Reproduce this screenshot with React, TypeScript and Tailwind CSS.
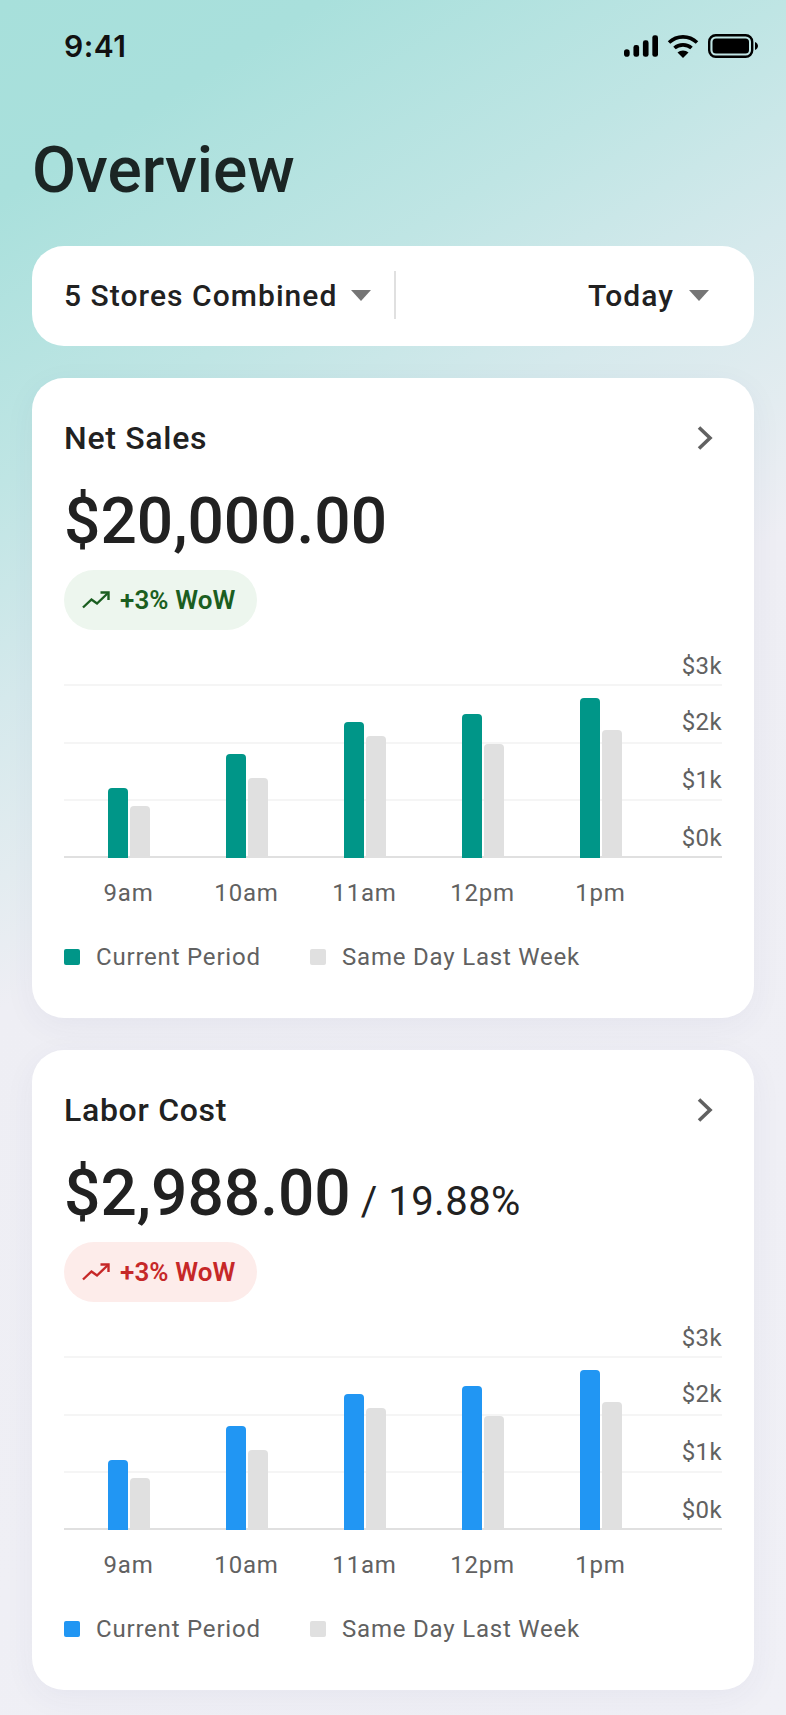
import React from "react";

type Group = { label: string; cur: number; prev: number };
const groups: Group[] = [
  { label: "9am", cur: 70, prev: 52 },
  { label: "10am", cur: 104, prev: 80 },
  { label: "11am", cur: 136, prev: 122 },
  { label: "12pm", cur: 144, prev: 114 },
  { label: "1pm", cur: 160, prev: 128 },
];

function Caret() {
  return (
    <svg width="20" height="11" viewBox="0 0 20 11" className="shrink-0">
      <path d="M0 0H20L10 11Z" fill="#757575" />
    </svg>
  );
}

function Trend({ color }: { color: string }) {
  return (
    <svg width="28" height="18" viewBox="0 0 28 18" fill="none" stroke={color} strokeWidth="2.4" className="shrink-0">
      <path d="M1 16.5 L9.5 8.5 L15 12.5 L26 2" />
      <path d="M18.5 1.5 H26.5 V9" />
    </svg>
  );
}

function Card({
  title,
  amount,
  extra,
  badgeClass,
  trendColor,
  barClass,
}: {
  title: string;
  amount: string;
  extra?: string;
  badgeClass: string;
  trendColor: string;
  barClass: string;
}) {
  return (
    <section className="bg-white rounded-[32px] h-[640px] px-8 pt-[40px] shadow-[0_8px_32px_rgba(60,60,110,0.05)]">
      <div className="flex items-center justify-between h-[40px]">
        <h2 className="text-[32px] leading-[40px] font-[460] text-[#212121] tracking-[0.7px]">{title}</h2>
        <svg width="20" height="26" viewBox="0 0 20 26" fill="none" stroke="#616161" strokeWidth="3.6" className="mr-[7px]">
          <path d="M4 2.5 L15 13 L4 23.5" />
        </svg>
      </div>
      <div className="flex items-baseline mt-[24px] h-[76px] leading-[80px]">
        <span className="text-[64px] font-medium text-[#212121]">{amount}</span>
        {extra && <span className="text-[40px] font-normal text-[#212121] ml-[10px] tracking-[0.5px]">{extra}</span>}
      </div>
      <div className={`flex items-center gap-[10px] w-[193px] h-[60px] rounded-[30px] mt-[12px] pl-[18px] ${badgeClass}`}>
        <Trend color={trendColor} />
        <span className="text-[26px] font-semibold tracking-[0.1px]">+3% WoW</span>
      </div>

      <div className="relative mt-[24px] h-[263px]">
        <div className="absolute left-0 right-0 top-[30px] border-t-2 border-[#f5f5f5]" />
        <div className="absolute left-0 right-0 top-[88px] border-t-2 border-[#f5f5f5]" />
        <div className="absolute left-0 right-0 top-[145px] border-t-2 border-[#f5f5f5]" />
        <div className="absolute left-0 right-0 top-[202px] border-t-2 border-[#e0e0e0]" />
        <div className="absolute right-0 top-0 bottom-0 text-[24px] leading-[32px] text-[#616161] tracking-[0.4px] text-right">
          <div className="absolute right-0 top-[-4px]">$3k</div>
          <div className="absolute right-0 top-[52px]">$2k</div>
          <div className="absolute right-0 top-[110px]">$1k</div>
          <div className="absolute right-0 top-[168px]">$0k</div>
        </div>
        <div className="absolute left-[6px] top-0 flex">
          {groups.map((g) => (
            <div key={g.label} className="w-[118px] flex flex-col items-center">
              <div className="h-[204px] flex items-end gap-[2px]">
                <div className={`w-[20px] rounded-t-[4px] ${barClass}`} style={{ height: g.cur }} />
                <div className="w-[20px] rounded-t-[4px] bg-[#e0e0e0]" style={{ height: g.prev }} />
              </div>
              <div className="mt-[19px] text-[24px] leading-[32px] text-[#616161] tracking-[0.8px] pr-[1px]">{g.label}</div>
            </div>
          ))}
        </div>
      </div>

      <div className="flex items-center mt-[24px] h-[32px] text-[24px] text-[#616161] tracking-[0.8px]">
        <span className={`w-[16px] h-[16px] rounded-[2px] ${barClass}`} />
        <span className="ml-[16px] w-[214px]">Current Period</span>
        <span className="w-[16px] h-[16px] rounded-[2px] bg-[#e0e0e0]" />
        <span className="ml-[16px]">Same Day Last Week</span>
      </div>
    </section>
  );
}

export default function App() {
  return (
    <div
      className="w-[786px] h-[1715px] overflow-hidden bg-[linear-gradient(148.6deg,#a7e0db_0%,#a9e0dc_9%,#bfe5e4_22%,#d5e9ec_32%,#e3ecf0_40%,#eeeef4_46%,#f0f0f6_100%)]"
      style={{ fontFamily: "Roboto, sans-serif" }}
    >
      <div className="flex items-center justify-between h-[90px] pl-[64px] pr-[28px] pt-[2px]">
        <span className="text-[30px] font-semibold text-[#111] tracking-[0.5px]" style={{ fontFamily: "Inter, sans-serif" }}>9:41</span>
        <div className="flex items-center gap-[9px]">
          <svg width="34" height="22" viewBox="0 0 36 23" fill="#000">
            <rect x="0" y="15" width="6" height="8" rx="3" />
            <rect x="10" y="10.5" width="6" height="12.5" rx="2.5" />
            <rect x="20" y="5.5" width="6" height="17.5" rx="2.5" />
            <rect x="30" y="0" width="6" height="23" rx="2.5" />
          </svg>
          <svg width="32" height="24" viewBox="0 0 32 24" fill="none" stroke="#000" strokeWidth="3.6">
            <path d="M2 8.5 C10 1 22 1 30 8.5" />
            <path d="M7.5 14 C12 9.8 20 9.8 24.5 14" />
            <path d="M16 24 L10.5 18.5 C13.5 15.8 18.5 15.8 21.5 18.5 Z" fill="#000" stroke="none" />
          </svg>
          <svg width="50" height="24" viewBox="0 0 50 24" fill="none">
            <rect x="1.2" y="1.2" width="43" height="21.6" rx="6.5" stroke="#000" strokeWidth="2.4" />
            <rect x="4.5" y="4.5" width="36.5" height="15" rx="3.5" fill="#000" />
            <path d="M47 8 C49 9 50 10.5 50 12 C50 13.5 49 15 47 16 Z" fill="#000" />
          </svg>
        </div>
      </div>

      <h1 className="pl-[32px] mt-[41px] h-[77px] text-[64px] leading-[80px] font-medium text-[#1b2524]">Overview</h1>

      <div className="mx-[32px] w-[722px]">
        <div className="mt-[38px] h-[100px] bg-white rounded-[32px] flex items-center pl-[32px] pr-[45px] pb-[2px] text-[30px] font-[460] text-[#212121] tracking-[1.05px]">
          <span>5 Stores Combined</span>
          <span className="ml-[14px]"><Caret /></span>
          <span className="ml-[23px] w-[2px] h-[48px] bg-[#e0e0e0]" />
          <span className="ml-auto">Today</span>
          <span className="ml-[15px]"><Caret /></span>
        </div>

        <div className="mt-[32px] flex flex-col gap-[32px]">
          <Card
            title="Net Sales"
            amount="$20,000.00"
            badgeClass="bg-[#edf6ee] text-[#1b5e20]"
            trendColor="#1b5e20"
            barClass="bg-[#009688]"
          />
          <Card
            title="Labor Cost"
            amount="$2,988.00"
            extra="/ 19.88%"
            badgeClass="bg-[#fdecea] text-[#c62828]"
            trendColor="#c62828"
            barClass="bg-[#2196f3]"
          />
        </div>
      </div>
    </div>
  );
}
